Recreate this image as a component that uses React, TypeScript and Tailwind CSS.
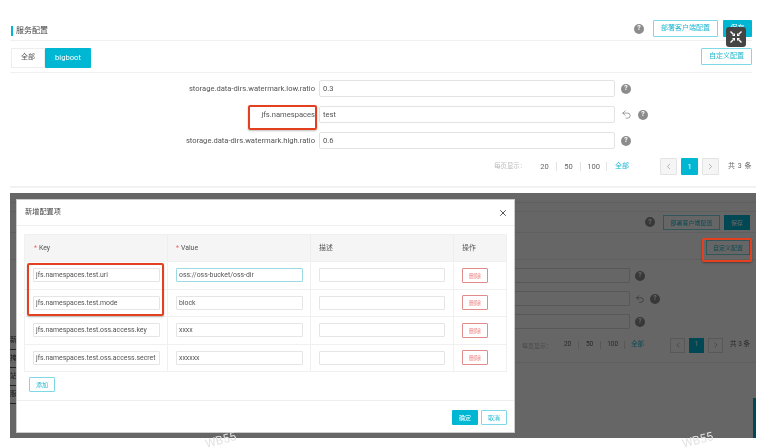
import { Undo2, X, ChevronLeft, ChevronRight } from "lucide-react";

const FONT = "[font-family:Roboto,'Noto_Sans_CJK_SC',sans-serif]";

function Help() {
  return (
    <span className="flex h-[10px] w-[10px] shrink-0 items-center justify-center rounded-full bg-[#8c8c8c] text-[7px] font-bold leading-none text-white">
      ?
    </span>
  );
}

function Row({ label, value, undo, boxed }: { label: string; value: string; undo?: boolean; boxed?: boolean }) {
  return (
    <div className="flex h-[17px] items-center">
      <div className="relative w-[305px] whitespace-nowrap text-right text-[7.6px] text-[#555]">
        {label}
        {boxed && (
          <div className="absolute left-[238px] top-[-4px] h-[25px] w-[69px] rounded-[2px] border-2 border-[#e2401f] shadow-[0_1px_2px_rgba(0,0,0,0.25)]" />
        )}
      </div>
      <div className="ml-[4px] flex h-[17px] w-[296px] items-center rounded-[2px] border border-[#e3e3e3] bg-white pl-[3px] text-[7.6px] text-[#555]">
        {value}
      </div>
      <div className="ml-[6px] flex items-center gap-[6px]">
        {undo && <Undo2 size={11} strokeWidth={1.2} className="text-[#555]" />}
        <Help />
      </div>
    </div>
  );
}

function Pagination() {
  return (
    <div className="flex items-center justify-end text-[7.6px] text-[#666]">
      <span className="mr-[7px] text-[6.4px] text-[#bbb]">每页显示：</span>
      <span className="w-[23px] text-center">20</span>
      <span className="h-[9px] w-px bg-[#e5e5e5]" />
      <span className="w-[23px] text-center">50</span>
      <span className="h-[9px] w-px bg-[#e5e5e5]" />
      <span className="w-[25px] text-center">100</span>
      <span className="h-[9px] w-px bg-[#e5e5e5]" />
      <span className="ml-[8px] text-[7px] text-[#22b8d0]">全部</span>
      <div className="ml-[31px] flex items-center gap-[4px]">
        <span className="flex h-[17px] w-[17px] items-center justify-center rounded-[1px] border border-[#e3e3e3] bg-[#f5f5f5] text-[#999]"><ChevronLeft size={9} /></span>
        <span className="flex h-[17px] w-[17px] items-center justify-center rounded-[1px] bg-[#00b7d3] text-white">1</span>
        <span className="flex h-[17px] w-[17px] items-center justify-center rounded-[1px] border border-[#e3e3e3] bg-[#f5f5f5] text-[#999]"><ChevronRight size={9} /></span>
      </div>
      <span className="ml-[9px] text-[7px] tracking-[0.5px]">共 3 条</span>
    </div>
  );
}

function TopPanel() {
  return (
    <section className="flex h-[193px] w-[752px] flex-col pl-[10px]">
      <div className="flex h-[41px] items-end border-b border-[#f0f0f0] pb-[3px]">
        <span className="mb-px ml-px h-[10px] w-[2px] bg-[#00b7d3]" />
        <span className="ml-[3px] text-[8px] leading-[12px] text-[#444]">服务配置</span>
        <div className="ml-auto flex items-center">
          <Help />
          <button className="ml-[9px] h-[17px] w-[65px] rounded-[1px] border border-[#7fd8e6] text-[7px] text-[#22b8d0]">部署客户端配置</button>
          <button className="ml-[5px] h-[17px] w-[29px] rounded-[1px] bg-[#00b7d3] text-[7px] text-white">保存</button>
        </div>
      </div>
      <div className="flex h-[32px] items-center border-b border-[#f0f0f0] pt-[2px]">
        <button className="ml-px h-[20px] w-[34px] border border-[#eee] text-[7px] text-[#555]">全部</button>
        <button className="h-[20px] w-[46px] rounded-[1px] bg-[#00b7d3] text-[7.6px] text-white">bigboot</button>
        <button className="ml-auto mb-[2px] h-[17px] w-[51px] rounded-[1px] border border-[#7fd8e6] text-[7px] text-[#22b8d0]">自定义配置</button>
      </div>
      <div className="mt-[7px] flex flex-col gap-[9px]">
        <Row label="storage.data-dirs.watermark.low.ratio" value="0.3" />
        <Row label="jfs.namespaces" value="test" undo boxed />
        <Row label="storage.data-dirs.watermark.high.ratio" value="0.6" />
      </div>
      <div className="mt-[9px]"><Pagination /></div>
      <div className="mt-[11px] h-[2px] w-[746px] bg-[#f2f2f2]" />
    </section>
  );
}

function BehindRow({ undo }: { undo?: boolean }) {
  return (
    <div className="ml-[500px] flex h-[15px] items-center">
      <div className="h-[15px] w-[120px] rounded-[1px] border border-[#ddd]" />
      <div className="ml-[5px] flex items-center gap-[5px]">
        {undo && <Undo2 size={10} strokeWidth={1.2} className="text-[#555]" />}
        <Help />
      </div>
    </div>
  );
}

const GRID = "grid grid-cols-[143px_143px_143px_53px]";

function ModalRow({ k, v, active }: { k: string; v: string; active?: boolean }) {
  return (
    <div className={`${GRID} h-[27.5px] border-b border-[#f0f0f0] text-[6.9px] text-[#555]`}>
      <div className="flex items-center border-r border-[#f0f0f0] pl-[8px]">
        <div className="flex h-[14px] w-[127px] items-center whitespace-nowrap rounded-[1px] border border-[#e5e5e5] pl-[2px]">{k}</div>
      </div>
      <div className="flex items-center border-r border-[#f0f0f0] pl-[8px]">
        <div className={`flex h-[14px] w-[127px] items-center rounded-[1px] border pl-[2px] ${active ? "border-[#9adbe6]" : "border-[#e5e5e5]"}`}>{v}</div>
      </div>
      <div className="flex items-center border-r border-[#f0f0f0] pl-[8px]">
        <div className="h-[14px] w-[126px] rounded-[1px] border border-[#e5e5e5]" />
      </div>
      <div className="flex items-center pl-[8px]">
        <button className="h-[15px] w-[26px] rounded-[1px] border border-[#e08c8c] text-[6px] text-[#e88]">删除</button>
      </div>
    </div>
  );
}

function Modal() {
  return (
    <div className="absolute left-[6px] top-[6px] h-[234px] w-[499px] border border-[#ccc] bg-white">
      <div className="flex h-[26px] items-center justify-between border-b border-[#eee] pl-[8px] pr-[6px] text-[7.2px] text-[#444]">
        <span>新增配置项</span>
        <X size={10} strokeWidth={2} className="text-[#333]" />
      </div>
      <div className="ml-[7px] mt-[8px] w-[483px] border-x border-t border-[#f0f0f0]">
        <div className={`${GRID} h-[27px] border-b border-[#f0f0f0] bg-[#f5f5f5] text-[6.9px] text-[#555]`}>
          <div className="flex items-center border-r border-[#eee] pl-[9px]"><span className="mr-[2px] text-[#ee6666]">*</span> Key</div>
          <div className="flex items-center border-r border-[#eee] pl-[8px]"><span className="mr-[2px] text-[#ee6666]">*</span> Value</div>
          <div className="flex items-center border-r border-[#eee] pl-[8px]">描述</div>
          <div className="flex items-center pl-[8px]">操作</div>
        </div>
        <ModalRow k="jfs.namespaces.test.uri" v="oss://oss-bucket/oss-dir" active />
        <ModalRow k="jfs.namespaces.test.mode" v="block" />
        <ModalRow k="jfs.namespaces.test.oss.access.key" v="xxxx" />
        <ModalRow k="jfs.namespaces.test.oss.access.secret" v="xxxxxx" />
      </div>
      <button className="ml-[12px] mt-[5px] block h-[15px] w-[26px] rounded-[1px] border border-[#7fd8e6] text-[6px] text-[#22b8d0]">添加</button>
      <div className="mt-[8px] flex h-[33px] items-center justify-end gap-[3px] border-t border-[#eee] pr-[7px]">
        <button className="h-[15px] w-[26px] rounded-[1px] bg-[#00b7d3] text-[6px] text-white">确定</button>
        <button className="h-[15px] w-[26px] rounded-[1px] border border-[#7fd8e6] text-[6px] text-[#22b8d0]">取消</button>
      </div>
      <div className="absolute left-[10px] top-[63px] h-[53px] w-[137px] rounded-[2px] border-2 border-[#e2401f] shadow-[0_1px_2px_rgba(0,0,0,0.25)]" />
    </div>
  );
}

function DarkPanel() {
  return (
    <section className="relative ml-[10px] h-[245px] w-[746px] overflow-hidden bg-white">
      <div className="h-[10px] border-b border-[#eee]" />
      <div className="h-[9px] border-b border-[#eee]" />
      <div className="flex h-[21px] items-center justify-end border-b border-[#eee] pr-[6px]">
        <Help />
        <button className="ml-[8px] h-[15px] w-[57px] border border-[#7fd8e6] text-[6px] text-[#22b8d0]">部署客户端配置</button>
        <button className="ml-[4px] h-[15px] w-[26px] bg-[#00b7d3] text-[6px] text-white">保存</button>
      </div>
      <div className="flex h-[27px] items-center justify-end border-b border-[#eee] pr-[6px] pt-[3px]">
        <button className="h-[15px] w-[44px] border border-[#7fd8e6] text-[6px] text-[#22b8d0]">自定义配置</button>
      </div>
      <div className="mt-[8px] flex flex-col gap-[8px]">
        <BehindRow />
        <BehindRow undo />
        <BehindRow />
      </div>
      <div className="mt-[7px] flex h-[18px] items-center justify-end pr-[6px] text-[6.5px] text-[#666]">
        <span className="mr-[5px] text-[6px] text-[#bbb]">每页显示：</span>
        <span className="w-[21px] text-center">20</span>
        <span className="h-[8px] w-px bg-[#ddd]" />
        <span className="w-[21px] text-center">50</span>
        <span className="h-[8px] w-px bg-[#ddd]" />
        <span className="w-[23px] text-center">100</span>
        <span className="h-[8px] w-px bg-[#ddd]" />
        <span className="ml-[6px] text-[#22b8d0]">全部</span>
        <div className="ml-[26px] flex items-center gap-[4px]">
          <span className="flex h-[15px] w-[15px] items-center justify-center border border-[#ddd] text-[#999]"><ChevronLeft size={8} /></span>
          <span className="flex h-[15px] w-[15px] items-center justify-center bg-[#00b7d3] text-white">1</span>
          <span className="flex h-[15px] w-[15px] items-center justify-center border border-[#ddd] text-[#999]"><ChevronRight size={8} /></span>
        </div>
        <span className="ml-[7px]">共 3 条</span>
      </div>
      <div className="mt-[8px] h-px bg-[#eee]" />
      <div className="absolute bottom-0 right-0 h-[40px] w-[3px] bg-[#00b7d3]" />
      <div className="absolute left-0 top-[139px] w-[6px] overflow-hidden text-[7px] leading-[17px] text-[#444]">
        <div className="border-b border-[#555]">新</div>
        <div className="border-b border-[#555]">掩</div>
        <div className="border-b border-[#555]">站</div>
        <div className="border-b border-[#555]">服</div>
      </div>
      <div className="absolute inset-0 bg-black/60" />
      <Modal />
      <div className="absolute left-[692px] top-[45px] h-[24px] w-[50px] rounded-[2px] border-2 border-[#e2401f] shadow-[0_1px_2px_rgba(0,0,0,0.35)]" />
    </section>
  );
}

export default function App() {
  return (
    <div className={`relative h-[448px] w-[774px] overflow-hidden bg-white blur-[0.5px] ${FONT}`}>
      <TopPanel />
      <DarkPanel />
      <div className="absolute left-[726px] top-[27px] flex h-[20px] w-[20px] items-center justify-center rounded-[3px] bg-[#444]">
        <svg width="14" height="14" viewBox="0 0 14 14" fill="none" stroke="#fff" strokeWidth="1.4">
          <path d="M1.5 1.5l3 3M12.5 1.5l-3 3M1.5 12.5l3-3M12.5 12.5l-3-3" />
          <path d="M6 3v3H3zM8 3v3h3zM6 11V8H3zM8 11V8h3z" fill="#fff" stroke="none" />
        </svg>
      </div>
      <span className="absolute left-[205px] top-[433px] rotate-[-15deg] text-[12px] leading-[14px] text-[#e2e2e2]">WB55</span>
      <span className="absolute left-[682px] top-[433px] rotate-[-15deg] text-[12px] leading-[14px] text-[#e2e2e2]">WB55</span>
    </div>
  );
}
